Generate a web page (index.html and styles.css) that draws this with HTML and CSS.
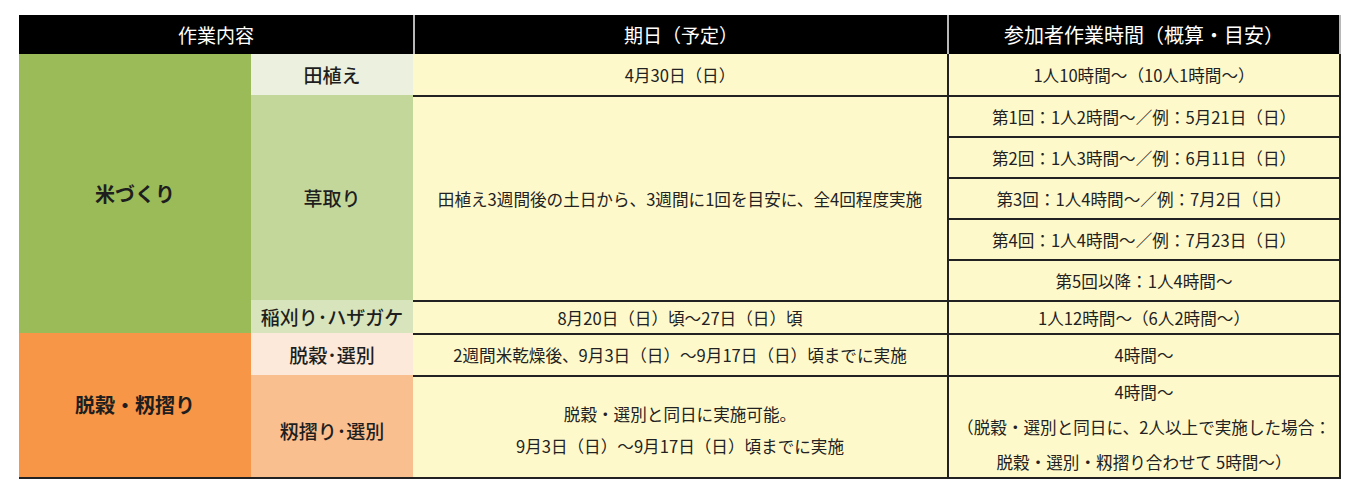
FILE: index.html
```html
<!DOCTYPE html>
<html lang="ja">
<head>
<meta charset="utf-8">
<title>作業スケジュール</title>
<link rel="stylesheet" href="styles.css">
</head>
<body>
<div class="sheet">
  <div class="hd hd-task">作業内容</div>
  <div class="hd hd-date">期日（予定）</div>
  <div class="hd hd-time">参加者作業時間（概算・目安）</div>

  <div class="cat cat-rice">米づくり</div>
  <div class="sub sub-plant">田植え</div>
  <div class="date first">4月30日（日）</div>
  <div class="time first">1人10時間〜（10人1時間〜）</div>

  <div class="sub sub-weed">草取り</div>
  <div class="date date-weed">田植え3週間後の土日から、3週間に1回を目安に、全4回程度実施</div>
  <div class="time">第1回：1人2時間〜／例：5月21日（日）</div>
  <div class="time">第2回：1人3時間〜／例：6月11日（日）</div>
  <div class="time">第3回：1人4時間〜／例：7月2日（日）</div>
  <div class="time">第4回：1人4時間〜／例：7月23日（日）</div>
  <div class="time">第5回以降：1人4時間〜</div>

  <div class="sub sub-harvest">稲刈り･ハザガケ</div>
  <div class="date">8月20日（日）頃〜27日（日）頃</div>
  <div class="time">1人12時間〜（6人2時間〜）</div>

  <div class="cat cat-thresh">脱穀・籾摺り</div>
  <div class="sub sub-thresh">脱穀･選別</div>
  <div class="date">2週間米乾燥後、9月3日（日）〜9月17日（日）頃までに実施</div>
  <div class="time">4時間〜</div>

  <div class="sub sub-hull">籾摺り･選別</div>
  <div class="date date-multi">
    <p>脱穀・選別と同日に実施可能。</p>
    <p>9月3日（日）〜9月17日（日）頃までに実施</p>
  </div>
  <div class="time time-multi">
    <p>4時間〜</p>
    <p>（脱穀・選別と同日に、2人以上で実施した場合：</p>
    <p>脱穀・選別・籾摺り合わせて 5時間〜）</p>
  </div>
</div>
</body>
</html>
```

FILE: styles.css
```css
* {
  box-sizing: border-box;
}

html, body {
  margin: 0;
  padding: 0;
  background: #ffffff;
}

body {
  font-family: "Noto Sans CJK JP", "Noto Sans", sans-serif;
  color: #222222;
}

.sheet {
  display: grid;
  grid-template-columns: 232px 162px 534px 394px;
  grid-template-rows: 39px repeat(6, 41px) 33px 42px 102px;
  margin: 15px 0 0 19px;
  width: 1322px;
  border-bottom: 2px solid #222222;
}

.sheet > div {
  display: flex;
  flex-direction: column;
  align-items: center;
  justify-content: center;
  text-align: center;
  white-space: nowrap;
}

.sheet p {
  margin: 0;
}

/* header */
.hd {
  background: #000000;
  color: #ffffff;
  font-size: 19px;
  line-height: 1;
}

.hd-task {
  grid-column: span 2;
}

.hd-date {
  border-left: 2px solid #b8b8b8;
}

.hd-time {
  border-left: 2px solid #b8b8b8;
  border-right: 2px solid #b8b8b8;
  font-size: 20px;
}

/* first column categories */
.cat {
  font-size: 20px;
  font-weight: 700;
  color: #1e1e1e;
}

.cat-rice {
  grid-row: span 7;
  background: #9bbb59;
}

.cat-thresh {
  grid-row: span 2;
  background: #f79646;
  padding-bottom: 2px;
}

/* second column sub tasks */
.sub {
  font-size: 19px;
  font-weight: 500;
  color: #1e1e1e;
}

.sub-plant {
  background: #ebf1de;
}

.sub-weed {
  grid-row: span 5;
  background: #c4d79b;
}

.sub-harvest {
  background: #d7e4bc;
}

.sub-thresh {
  background: #fde9d9;
}

.sub-hull {
  background: #fabf8f;
  padding-top: 8px;
}

/* date column */
.date {
  background: #fef9cb;
  font-size: 16.6px;
  border-top: 2px solid #222222;
}

.date.first {
  border-top: none;
}

.date-weed {
  grid-row: span 5;
}

.date-multi {
  line-height: 32px;
  padding-top: 5px;
}

/* time column */
.time {
  background: #fef9cb;
  font-size: 16.6px;
  border-top: 2px solid #222222;
  border-left: 2px solid #222222;
  border-right: 2px solid #222222;
}

.time.first {
  border-top: none;
}

.time-multi {
  line-height: 35px;
}
```
